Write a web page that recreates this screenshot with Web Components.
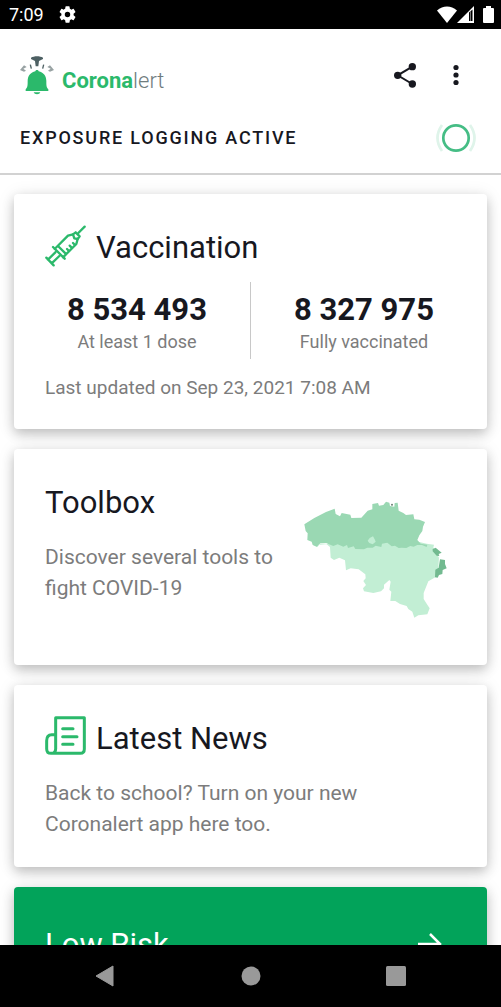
<!DOCTYPE html>
<html lang="en">
<head>
<meta charset="utf-8">
<meta name="viewport" content="width=device-width, initial-scale=1">
<title>Coronalert</title>
<style>
  html, body { margin: 0; height: 100%; }
  body { background: #fff; color: #17181f; font-family: Roboto, sans-serif; }
</style>
</head>
<body>
<corona-app></corona-app>

<script>
const define = (name, html) => {
  const template = document.createElement('template');
  template.innerHTML = html;
  customElements.define(name, class extends HTMLElement {
    constructor() {
      super();
      this.attachShadow({ mode: 'open' }).append(template.content.cloneNode(true));
    }
  });
};

define('status-bar', `
<style>
  :host { display: flex; align-items: center; gap: 15px; height: 29px; padding: 0 7px 0 9px; background: #000; color: #fff; font-size: 18px; box-sizing: border-box; }
  svg { display: block; }
  .system { display: flex; align-items: center; margin-left: auto; }
  .battery { margin-left: 9px; }
</style>
<time>7:09</time>
<svg width="17" height="17" viewBox="2 2 20 20" fill="#fff" role="img" aria-label="Settings"><path d="M19.14 12.94a7 7 0 0 0 0-1.88l2.03-1.58a.5.5 0 0 0 .12-.61l-1.92-3.32a.5.5 0 0 0-.59-.22l-2.39.96a7 7 0 0 0-1.62-.94l-.36-2.54a.5.5 0 0 0-.48-.41h-3.84a.5.5 0 0 0-.47.41l-.36 2.54a7 7 0 0 0-1.62.94l-2.39-.96a.5.5 0 0 0-.59.22L2.74 8.87a.5.5 0 0 0 .12.61l2.03 1.58a7 7 0 0 0 0 1.88l-2.03 1.58a.5.5 0 0 0-.12.61l1.92 3.32c.12.22.37.29.59.22l2.39-.96c.5.38 1.03.7 1.62.94l.36 2.54c.05.24.24.41.48.41h3.84c.24 0 .44-.17.47-.41l.36-2.54a7 7 0 0 0 1.62-.94l2.39.96c.22.08.47 0 .59-.22l1.92-3.32a.5.5 0 0 0-.12-.61zM12 15.2a3.2 3.2 0 1 1 0-6.4 3.2 3.2 0 0 1 0 6.4z"/></svg>
<div class="system">
  <svg width="20" height="17" viewBox="0 0 20 17" fill="#fff"><path d="M10 17 0 4.500C6-.8 14-.8 20 4.500z"/></svg>
  <svg width="17" height="17" viewBox="0 0 17 17"><path d="M17 0v17H0z" fill="#fff"/><path d="M12 6.500 15.500 3.500V15H12z" fill="#000"/><path d="M13.500 5v10" stroke="#777" stroke-width="1"/></svg>
  <svg class="battery" width="11" height="17" viewBox="0 0 11 17" fill="#fff"><path d="M3 0h5v2h2a1 1 0 0 1 1 1v13a1 1 0 0 1-1 1H1a1 1 0 0 1-1-1V3a1 1 0 0 1 1-1h2z"/></svg>
</div>`);

define('app-logo', `
<style>
  :host { display: flex; align-items: center; gap: 8px; color: #6f7c7e; font-size: 22px; line-height: 36px; font-weight: 300; }
  span { padding-top: 12px; }
  b { color: #2bb96b; font-weight: 700; }
  svg { display: block; }
</style>
<svg width="34" height="39" viewBox="0 0 102 117" aria-hidden="true">
  <path d="M33 5C42-1 60-1 69 5V9L57 15 55 31H47L45 15 33 9z" fill="#4d6063"/>
  <path d="M0 42 12 28 20 33 10 38 18 44 12 47zM102 42 90 28 82 33 92 38 84 44 90 47z" fill="#98a2a3"/>
  <path d="M31 26 34 38M71 26 68 38" stroke="#4d6063" stroke-width="4"/>
  <path d="M51 42c3 0 5 2 5 4 14 3 23 14 23 28 0 14 0 19 6 26v5H17v-5c6-7 6-12 6-26 0-14 9-25 23-28 0-2 2-4 5-4z" fill="#2bb96b"/>
  <path d="M41 109h20c-2 8-18 8-20 0z" fill="#2bb96b"/>
</svg>
<span><b>Corona</b>lert</span>`);

define('app-header', `
<style>
  :host { display: block; padding: 0 20px 18px; border-bottom: 2px solid #d2d2d2; background: #fff; }
  .bar { display: flex; align-items: center; height: 92px; }
  .actions { display: flex; margin-left: auto; margin-right: 5px; gap: 11px; }
  button { display: grid; place-items: center; width: 40px; height: 40px; padding: 0; border: 0; background: none; color: #17181f; }
  .state { display: flex; align-items: center; justify-content: space-between; height: 34px; padding-right: 5px; }
  h1 { margin: 0; font-size: 18px; line-height: 24px; font-weight: 500; letter-spacing: 0.1em; }
  svg { display: block; }
</style>
<div class="bar">
  <app-logo></app-logo>
  <div class="actions">
    <button aria-label="Share"><svg width="22" height="25" viewBox="0 0 66 75" fill="currentColor"><path d="M55 11 11 37 55 63" fill="none" stroke="currentColor" stroke-width="6"/><circle cx="55" cy="11" r="11"/><circle cx="11" cy="37" r="11"/><circle cx="55" cy="63" r="11"/></svg></button>
    <button aria-label="More options"><svg width="6" height="22" viewBox="0 0 6 22" fill="currentColor"><circle cx="3" cy="3.500" r="2.600"/><circle cx="3" cy="11" r="2.600"/><circle cx="3" cy="18.500" r="2.600"/></svg></button>
  </div>
</div>
<div class="state">
  <h1>EXPOSURE LOGGING ACTIVE</h1>
  <svg width="40" height="30" viewBox="0 0 40 30" fill="none" role="img" aria-label="Active"><circle cx="20" cy="15" r="12.700" stroke="#45bd85" stroke-width="2.700"/><path d="M6 2Q-3 15 6 28M34 2Q43 15 34 28" stroke="#dff4ea" stroke-width="2.700"/></svg>
</div>`);

define('info-card', `
<style>
  :host { display: block; padding: 31px 31px 27px; border-radius: 4px; background: #fff; box-shadow: 0 5px 12px rgba(0,0,0,.2), 0 2px 18px rgba(0,0,0,.1); box-sizing: border-box; }
  .layout { display: flex; align-items: flex-start; justify-content: space-between; }
  .content { flex: 1; min-width: 0; }
  .head { display: flex; }
  ::slotted([slot=icon]) { flex: none; margin-right: 10px; }
  h2 { margin: 0; font-size: 31px; line-height: 46px; font-weight: 400; }
</style>
<div class="layout">
  <div class="content">
    <div class="head"><slot name="icon"></slot><h2><slot name="title"></slot></h2></div>
    <slot></slot>
  </div>
  <slot name="media"></slot>
</div>`);

define('card-text', `
<style>:host { display: block; margin-top: 16px; color: #7c7c7c; font-size: 21px; line-height: 31px; }</style>
<slot></slot>`);

define('vaccine-stat', `
<style>
  :host { display: block; flex: 1; padding-top: 10px; text-align: center; }
  strong { display: block; font-size: 31px; line-height: 36px; font-weight: 700; }
  span { display: block; color: #7c7c7c; font-size: 18px; line-height: 28px; }
</style>
<strong><slot name="value"></slot></strong><span><slot></slot></span>`);

define('vaccine-stats', `
<style>
  :host { display: block; }
  .row { display: flex; min-height: 77px; margin: 11px -21px 15px; }
  .line { width: 1px; background: #c8c8c8; }
  p { margin: 0; color: #7c7c7c; font-size: 19px; line-height: 28px; }
</style>
<div class="row">
  <vaccine-stat><span slot="value">8 534 493</span>At least 1 dose</vaccine-stat>
  <div class="line"></div>
  <vaccine-stat><span slot="value">8 327 975</span>Fully vaccinated</vaccine-stat>
</div>
<p>Last updated on Sep 23, 2021 7:08 AM</p>`);

define('syringe-icon', `
<style>:host { display: block; } svg { display: block; }</style>
<svg width="41" height="42" viewBox="0 0 123 126" fill="none" stroke="#2bb96b" stroke-width="7" stroke-linecap="round" stroke-linejoin="round">
  <path d="M119 5 100 24M4 98 26 121M24 66 59 101M9 104 31 82M20 115 43 93M29 72 69 32 84 28M54 97 94 57 98 42M42 66 62 86"/>
  <path d="M84 28 92 22 104 34 98 42 88 40zM66 72 72 78M74 62 80 68M84 54 90 60"/>
</svg>`);

define('news-icon', `
<style>:host { display: block; } svg { display: block; }</style>
<svg width="41" height="39" viewBox="0 0 123 117" fill="none" stroke="#2bb96b" stroke-width="9" stroke-linecap="round" stroke-linejoin="round">
  <path d="M32 98V5H118V99Q118 112 106 112H18Q5 112 5 98V74Q5 56 20 56H30M32 98Q32 111 20 112M53 38H84M53 62H96M53 85H84"/>
</svg>`);

define('belgium-map', `
<style>:host { display: flex; align-items: center; height: 158px; margin: 0 9px 0 16px; } svg { display: block; width: 143px; height: 117px; }</style>
<svg viewBox="42 62 429 351" role="img" aria-label="Map of Belgium">
  <path fill="#c2eed4" d="M72 195 82 200 90 190 108 190 120 200 122 232 132 239 148 232 165 240 168 270 182 264 206 267 226 282 227 294 220 302 228 314 219 324 222 333 250 338 273 333 282 324 282 313 298 299 302 304 298 328 304 334 301 362 316 362 330 371 350 377 355 386 367 394 373 412 385 405 412 402 419 384 410 370 401 356 401 338 415 303 436 291 445 262 447 232 430 202 432 193 410 190 385 184 240 180z"/>
  <path fill="#9ad8b3" d="M43 132 73 113 108 95 134 85 137 101 150 108 155 98 181 103 184 113 214 112 233 91 247 87 247 71 264 68 267 76 280 74 288 64 298 67 300 77 313 79 314 68 323 67 326 91 340 98 348 104 370 102 373 117 388 118 405 125 399 139 397 152 388 165 382 179 392 190 412 193 410 200 396 194 382 194 371 199 361 197 349 203 335 202 326 203 315 196 305 198 292 187 276 190 274 200 257 196 248 202 232 202 222 207 196 206 191 198 174 203 171 194 160 199 143 192 130 197 108 188 91 189 80 199 68 194 65 184 52 179 53 159 47 152z"/>
  <path fill="#c2eed4" d="M239 173 249 168 254 177 257 184 248 192 238 188 233 181z"/>
  <path fill="#72ba90" d="M428 206 437 202 446 210 455 217 446 221 448 227 440 226 428 213zM450 237 465 239 465 251 470 264 458 269 457 281 447 284 443 292 435 291 436 268 446 262z"/>
  <circle cx="306" cy="73" r="3" fill="#687f72"/>
</svg>`);

define('risk-card', `
<style>
  :host { display: block; }
  a { display: flex; align-items: center; justify-content: space-between; padding: 35px 45px 60px 31px; border-radius: 4px; background: #02a35a; color: #fff; text-decoration: none; box-shadow: 0 5px 12px rgba(0,0,0,.2), 0 2px 18px rgba(0,0,0,.1); }
  h2 { margin: 0; font-size: 31px; line-height: 46px; font-weight: 400; }
  svg { display: block; }
</style>
<a href="#risk"><h2>Low Risk</h2>
<svg width="24" height="24" viewBox="0 0 24 24" fill="none" stroke="#fff" stroke-width="2.500"><path d="M0 11H22M12 1 22 11 12 21"/></svg></a>`);

define('system-nav', `
<style>
  :host { display: flex; align-items: center; justify-content: center; gap: 105px; height: 62px; background: #000; }
  button { display: grid; place-items: center; width: 40px; height: 40px; padding: 0; border: 0; background: none; }
  svg { display: block; }
</style>
<button aria-label="Back"><svg width="22" height="22" viewBox="0 0 22 22"><path d="M18 1 1 11 18 21z" fill="#999" stroke="#999" stroke-width="1" stroke-linejoin="round"/></svg></button>
<button aria-label="Home"><svg width="20" height="20" viewBox="0 0 20 20"><circle cx="10" cy="10" r="9.500" fill="#999"/></svg></button>
<button aria-label="Recent apps"><svg width="20" height="20" viewBox="0 0 20 20"><rect width="20" height="20" rx="1.500" fill="#999"/></svg></button>`);

define('corona-app', `
<style>
  :host { display: flex; flex-direction: column; height: 100vh; }
  status-bar, app-header, system-nav { flex: none; }
  main { flex: 1; min-height: 0; overflow-y: auto; scrollbar-width: none; display: flex; flex-direction: column; gap: 20px; padding: 19px 14px 20px; }
  main > * { flex: none; }
</style>
<status-bar></status-bar>
<app-header></app-header>
<main>
  <info-card><syringe-icon slot="icon"></syringe-icon><span slot="title">Vaccination</span><vaccine-stats></vaccine-stats></info-card>
  <info-card><span slot="title">Toolbox</span><card-text>Discover several tools to fight COVID-19</card-text><belgium-map slot="media"></belgium-map></info-card>
  <info-card><news-icon slot="icon"></news-icon><span slot="title">Latest News</span><card-text>Back to school? Turn on your new Coronalert app here too.</card-text></info-card>
  <risk-card></risk-card>
</main>
<system-nav></system-nav>`);
</script>
</body>
</html>
